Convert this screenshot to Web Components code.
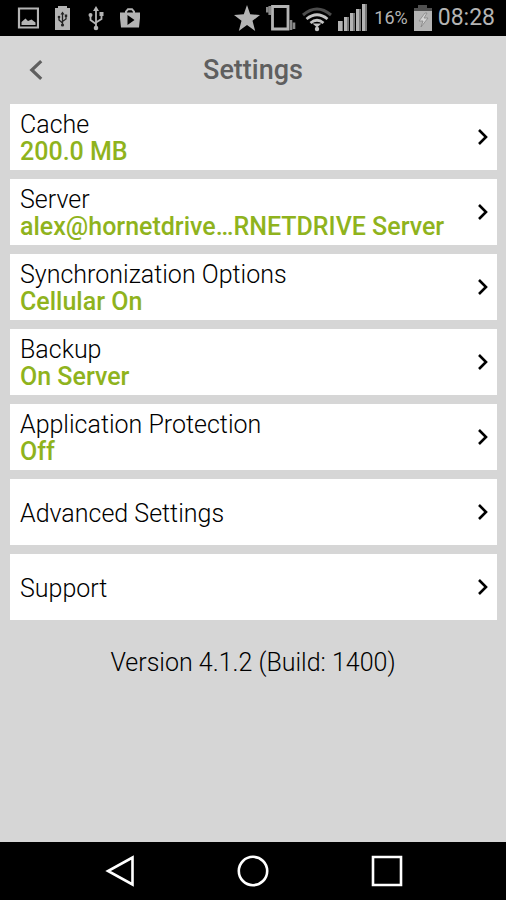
<!DOCTYPE html>
<html lang="en">
<head>
<meta charset="utf-8">
<meta name="viewport" content="width=device-width, initial-scale=1">
<title>Settings</title>
<style>
body { margin: 0; background: #d6d6d6; font-family: Roboto, "Liberation Sans", sans-serif; }
</style>
</head>
<body>
<settings-screen></settings-screen>
<script>
const define = (name, html) => {
  const template = document.createElement('template');
  template.innerHTML = html;
  customElements.define(name, class extends HTMLElement {
    constructor() {
      super();
      this.attachShadow({ mode: 'open' }).append(template.content.cloneNode(true));
    }
  });
};

define('status-bar', `
<style>
:host { display: flex; justify-content: space-between; align-items: center; height: 36px; padding: 0 11px 0 17px; background: #000; color: #b4b4b4; }
div { display: flex; align-items: center; }
.notices { gap: 12px; }
.system { gap: 6px; }
svg { display: block; height: 36px; }
.level { font-size: 18px; line-height: 38px; }
.time { font-size: 23px; line-height: 38px; }
</style>
<div class="notices">
  <svg width="22" height="36" viewBox="0 0 22 36" role="img" aria-label="Screenshot saved"><path d="M2 8.500H21V27.500H2Z" fill="none" stroke="currentColor" stroke-width="2.200"/><path d="M4.500 25V22L8.500 18.500L11 21L14.500 19.500L18.500 22.500V25Z" fill="currentColor"/></svg>
  <svg width="22" height="36" viewBox="0 0 22 36" role="img" aria-label="Battery connected"><path d="M4 8H7V6H16V8H19V30H4Z" fill="currentColor"/><path d="M11.500 25V13M8 17V20L11.500 23M15 16V19L11.500 21.500" fill="none" stroke="#222" stroke-width="1.300"/><path d="M9.500 14.500L11.500 11.500L13.500 14.500Z" fill="#222"/><circle cx="11.500" cy="25" r="1.600" fill="#222"/><circle cx="8" cy="17" r="1.300" fill="#222"/><path d="M13.800 14.500H16.200V17H13.800Z" fill="#222"/></svg>
  <svg width="22" height="36" viewBox="0 0 22 36" role="img" aria-label="USB"><path d="M11 28V9M5.500 15V20L11 24M16.500 14V19L11 22.500" fill="none" stroke="currentColor" stroke-width="1.800"/><path d="M8 11L11 6L14 11Z" fill="currentColor"/><circle cx="11" cy="28" r="2.300" fill="currentColor"/><circle cx="5.500" cy="15" r="2" fill="currentColor"/><path d="M14.500 12H18.500V16H14.500Z" fill="currentColor"/></svg>
  <svg width="22" height="36" viewBox="0 0 22 36" role="img" aria-label="Play Store"><path d="M7 14V11.500L9 9.200H13L15 11.500V14" fill="none" stroke="currentColor" stroke-width="2"/><path fill-rule="evenodd" fill="currentColor" d="M1 12.500H21V18L20 27.500H2L1 18ZM8.500 15V25L15.500 20Z"/></svg>
</div>
<div class="system">
  <svg width="26" height="36" viewBox="0 0 26 36" role="img" aria-label="Favourite"><path fill="currentColor" d="M13 5L16.200 14.200L26 15L18.500 20.800L21.200 31L13 25L4.800 31L7.500 20.800L0 15L9.800 14.200Z"/></svg>
  <svg width="30" height="36" viewBox="0 0 30 36" role="img" aria-label="Vibrate"><path d="M6.500 6.500H22V29H6.500Z" fill="none" stroke="currentColor" stroke-width="2.800"/><path d="M1 7V12.500M3.700 6V15M25 20V30M28 22.500V29" stroke="#888" stroke-width="2.600"/></svg>
  <svg width="30" height="36" viewBox="0 0 30 36" role="img" aria-label="Wi-Fi"><path d="M1 15Q15 3 29 15" fill="none" stroke="#4c4c4c" stroke-width="3"/><path d="M4.500 19Q15 10.500 25.500 19M8.500 23Q15 17.500 21.500 23" fill="none" stroke="#c4c4c4" stroke-width="2.800"/><circle cx="15" cy="29" r="2.200" fill="#c4c4c4"/><path d="M10.500 23.500H19.500L15 27.500Z" fill="#c4c4c4"/></svg>
  <svg width="30" height="36" viewBox="0 0 30 36" role="img" aria-label="Signal"><path d="M0 21H5V31H0ZM6 17H11V31H6ZM12 13H17V31H12ZM18 9H23V31H18ZM24 4H29V31H24Z" fill="currentColor"/><path d="M4 21H5V31H4ZM9 17H11V31H9ZM15 13H17V31H15ZM21 9H23V31H21ZM27 4H29V31H27Z" fill="#777"/></svg>
  <span class="level">16%</span>
  <svg width="18" height="36" viewBox="0 0 18 36" role="img" aria-label="Charging"><path d="M4 5H13V8H18V12H0V8H4Z" fill="#505050"/><path d="M0 11H18V31H0Z" fill="currentColor"/><path d="M11 13L5 21H9L7 27L14 18H10L13 13Z" fill="#d4d4d4" stroke="#858585" stroke-width=".8"/></svg>
  <span class="time">08:28</span>
</div>`);

define('screen-header', `
<style>
:host { display: grid; grid-template-columns: 72px 1fr 72px; align-items: center; height: 68px; color: #5f5f5f; }
button { display: grid; place-items: center; height: 68px; padding: 0; border: 0; background: none; color: inherit; }
h1 { margin: 0; text-align: center; font-size: 27px; line-height: 32px; font-weight: 500; }
</style>
<button type="button" aria-label="Back"><svg width="14" height="22" viewBox="0 0 14 22"><path d="M12.200 2.200L2.800 11L12.200 19.800" fill="none" stroke="currentColor" stroke-width="3.200"/></svg></button>
<h1><slot></slot></h1>`);

define('setting-row', `
<style>
:host { display: block; }
button { display: flex; align-items: center; justify-content: space-between; width: 100%; height: 66px; padding: 0 8px 0 10px; border: 0; background: #fff; color: #000; font: inherit; text-align: left; }
.text { display: grid; min-width: 0; padding-top: 2px; font-size: 25px; font-weight: 300; line-height: 27px; }
.value { color: #8fb31d; font-weight: 500; }
svg { flex: none; }
</style>
<button type="button">
  <span class="text"><span><slot></slot></span><span class="value"><slot name="value"></slot></span></span>
  <svg width="12" height="18" viewBox="0 0 12 18" aria-hidden="true"><path d="M2 2L9 9L2 16" fill="none" stroke="currentColor" stroke-width="2.600"/></svg>
</button>`);

define('nav-bar', `
<style>
:host { display: flex; justify-content: center; gap: 102px; height: 58px; background: #000; color: #fff; }
button { display: grid; place-items: center; width: 32px; padding: 0; border: 0; background: none; color: inherit; }
svg { fill: none; stroke: currentColor; stroke-width: 2.600; }
</style>
<button type="button" aria-label="Back"><svg width="32" height="32" viewBox="0 0 32 32"><path d="M29.500 2.500V29.500L5 16Z"/></svg></button>
<button type="button" aria-label="Home"><svg width="32" height="32" viewBox="0 0 32 32"><circle cx="16" cy="16" r="14.200"/></svg></button>
<button type="button" aria-label="Recent apps"><svg width="32" height="32" viewBox="0 0 32 32"><path d="M2 2H30V30H2Z"/></svg></button>`);

define('settings-screen', `
<style>
:host { display: flex; flex-direction: column; min-height: 100vh; }
main { flex: 1; }
.rows { display: grid; gap: 9px; padding: 0 9px 0 10px; }
p { margin: 27px 0 0; text-align: center; font-size: 25px; font-weight: 300; line-height: 32px; color: #000; }
</style>
<status-bar></status-bar>
<screen-header>Settings</screen-header>
<main>
  <div class="rows">
    <setting-row>Cache<span slot="value">200.0 MB</span></setting-row>
    <setting-row>Server<span slot="value">alex@hornetdrive…RNETDRIVE Server</span></setting-row>
    <setting-row>Synchronization Options<span slot="value">Cellular On</span></setting-row>
    <setting-row>Backup<span slot="value">On Server</span></setting-row>
    <setting-row>Application Protection<span slot="value">Off</span></setting-row>
    <setting-row>Advanced Settings</setting-row>
    <setting-row>Support</setting-row>
  </div>
  <p>Version 4.1.2 (Build: 1400)</p>
</main>
<nav-bar></nav-bar>`);
</script>
</body>
</html>
